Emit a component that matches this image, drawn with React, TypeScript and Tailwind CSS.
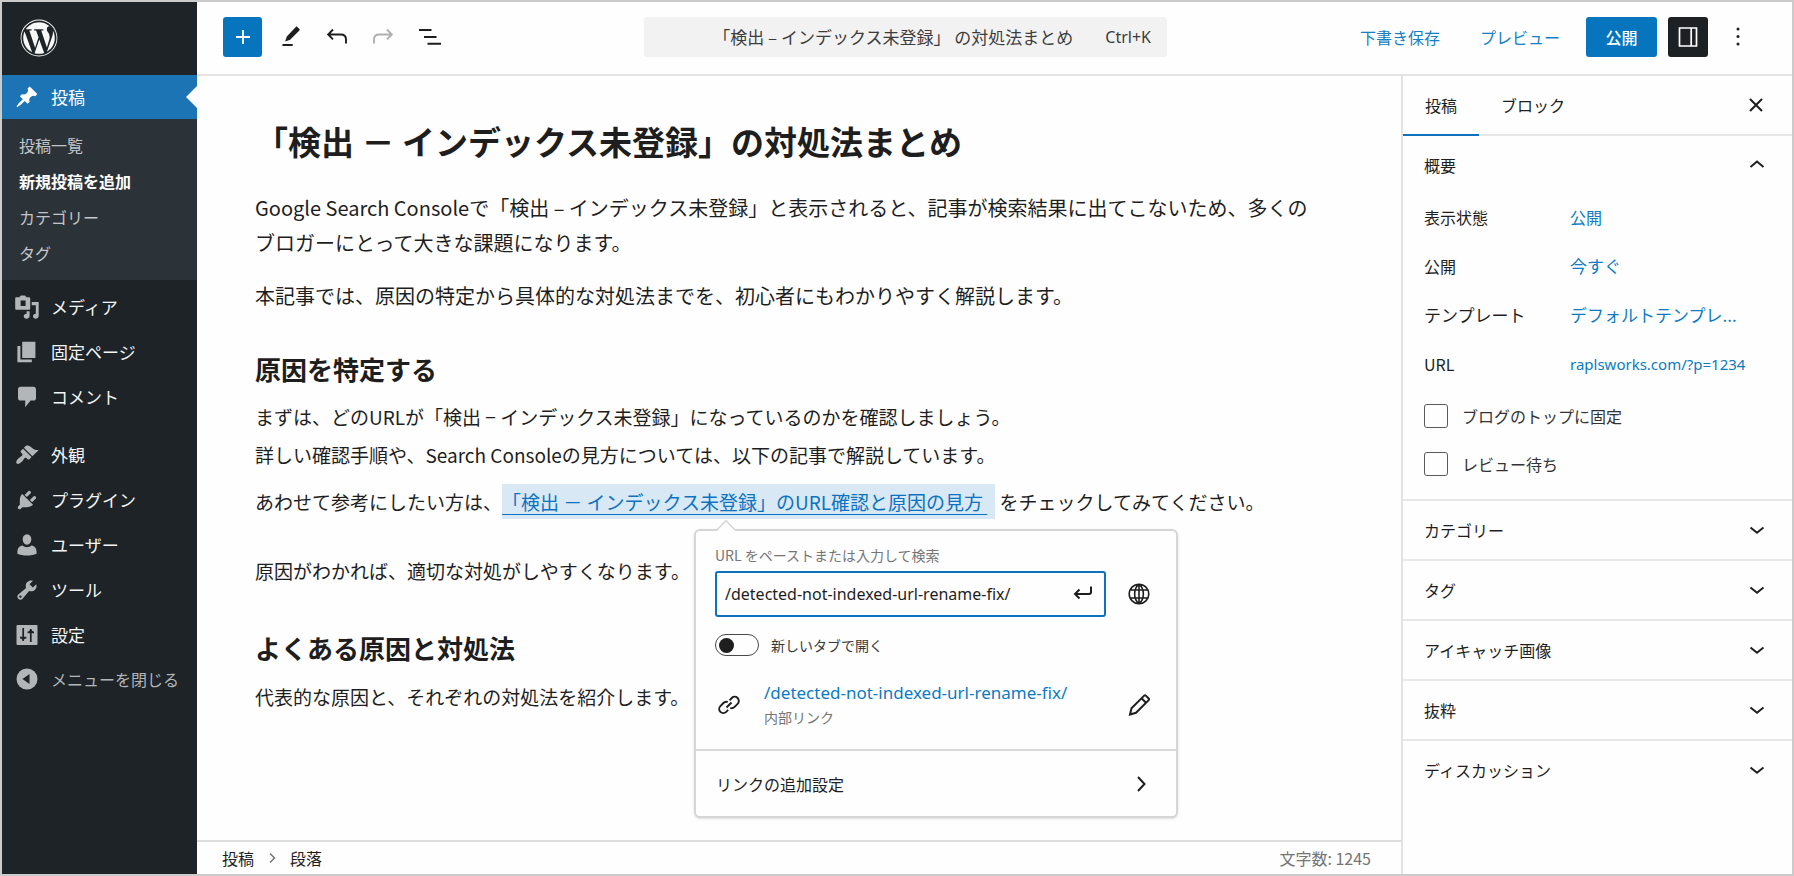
import type { ReactNode } from "react";
import { FaWordpress } from "react-icons/fa";

type MenuEntry = { label: string; icon: ReactNode; gapBefore?: boolean };

function Dash({ d, className = "" }: { d: string; className?: string }) {
  return (
    <svg viewBox="0 0 20 20" className={`size-6 shrink-0 ${className}`} fill="currentColor" aria-hidden="true">
      <path d={d} />
    </svg>
  );
}

const PIN =
  "M10.44 3.02l1.82-1.82 6.36 6.35-1.83 1.82c-1.05-.68-2.48-.57-3.41.36l-.75.75c-.92.93-1.04 2.35-.35 3.41l-1.83 1.82-2.41-2.41-2.8 2.79c-.42.42-3.38 2.71-3.8 2.29s1.86-3.39 2.28-3.81l2.79-2.79L4.1 9.36l1.83-1.82c1.05.69 2.48.57 3.4-.36l.75-.75c.93-.92 1.05-2.35.36-3.41z";

const menu: MenuEntry[] = [
  {
    label: "メディア",
    icon: (
      <svg viewBox="0 0 24 24" className="size-6 shrink-0" fill="currentColor" aria-hidden="true">
        <path
          fillRule="evenodd"
          d="M2 2.3h2.6V1.2h1V.4h4.6v.8h1v1.1h3.1c.5 0 .9.4.9.9v10.6c0 .5-.4.9-.9.9H1.1c-.5 0-.9-.4-.9-.9V3.200c0-.5.4-.9.9-.9zm3.600 3.200v5.600h5V5.500z"
        />
        <path d="M16.700 7h7v13.800c0 1.700-1.200 2.900-3 2.900-1.600 0-2.700-1-2.700-2.400s1.100-2.500 2.800-2.500V10.200h-4.100zM11.600 16.200h3v4.600c0 1.700-1.200 2.900-3 2.900s-2.900-1-2.900-2.400 1.200-2.500 2.900-2.500z" />
      </svg>
    ),
  },
  { label: "固定ページ", icon: <Dash d="M6 15V1.500h11V15H6zm-1.500 1.200h9.500v2.300H2V5h2.500z" /> },
  {
    label: "コメント",
    icon: <Dash d="M4.500 1.500h11c1.100 0 2 .9 2 2v7.500c0 1.100-.9 2-2 2h-2.500l-4.500 5.500V13h-4c-1.100 0-2-.9-2-2V3.500c0-1.100.9-2 2-2z" />,
  },
  {
    label: "外観",
    gapBefore: true,
    icon: (
      <Dash d="M14.480 11.060L7.410 3.990l1.500-1.500c.5-.56 2.300-.47 3.510.32 1.210.8 1.430 1.280 2.910 2.100 1.180.64 2.450 1.260 4.450.85zm-.71.71L6.700 4.700 4.930 6.470c-.39.39-.39 1.020 0 1.410l1.060 1.060c.39.39.39 1.030 0 1.420-.6.6-1.430 1.110-2.210 1.690-.35.26-.7.53-1.010.84C1.430 14.230.4 16.080 1.400 17.070c.99 1 2.840-.03 4.180-1.360.31-.31.58-.66.85-1.020.57-.78 1.080-1.610 1.690-2.210.39-.39 1.020-.39 1.410 0l1.060 1.060c.39.39 1.020.39 1.410 0z" />
    ),
  },
  {
    label: "プラグイン",
    icon: (
      <Dash d="M13.110 4.360L9.870 7.600 8 5.730l3.240-3.240c.35-.34 1.050-.2 1.560.32.52.51.66 1.210.31 1.550zm-8 1.770l.91-1.120 9.010 9.010-1.190.84c-.71.71-2.630 1.160-3.820 1.160H6.140L4.900 17.260c-.59.59-1.540.59-2.120 0-.59-.58-.59-1.530 0-2.120l1.240-1.240v-3.880c0-1.130.4-3.190 1.090-3.890zm7.260 3.970l3.240-3.240c.34-.35 1.040-.21 1.550.31.52.51.66 1.210.31 1.550l-3.240 3.250z" />
    ),
  },
  {
    label: "ユーザー",
    icon: (
      <Dash d="M10 1c2.200 0 3.600 1.800 3.600 4.200S12 9.700 10 9.700 6.400 7.600 6.400 5.200 7.800 1 10 1zM6.300 10.500c1 .8 2.200 1.300 3.700 1.300s2.700-.5 3.700-1.300c2.700.3 4.300 2.500 4.300 5.300v1.400c-2 1-5 1.500-8 1.500s-6-.5-8-1.500v-1.400c0-2.800 1.600-5 4.300-5.300z" />
    ),
  },
  {
    label: "ツール",
    icon: (
      <Dash d="M16.680 9.770c-1.340 1.340-3.300 1.670-4.950.99l-5.410 6.520c-.99.99-2.590.99-3.580 0s-.99-2.590 0-3.570l6.520-5.420c-.68-1.650-.35-3.610.99-4.950 1.280-1.280 3.120-1.620 4.720-1.060l-2.890 2.890 2.820 2.820 2.860-2.870c.53 1.580.18 3.390-1.080 4.650zM3.810 16.210c.4.39 1.040.39 1.430 0 .4-.4.4-1.040 0-1.430-.39-.4-1.030-.4-1.430 0-.39.39-.39 1.030 0 1.430z" />
    ),
  },
  {
    label: "設定",
    icon: (
      <svg viewBox="0 0 24 24" className="size-6 shrink-0" aria-hidden="true">
        <rect x="1.500" y="2" width="21" height="20" rx="1" fill="currentColor" />
        <path d="M8.200 5v13M15.800 6v13M5 14.700h6.400M12.600 9.300H19" stroke="#1d2327" strokeWidth="1.700" fill="none" />
        <path d="M5.400 14.700h5.600l-2.800 2.600zM13 9.300h5.600L15.800 6z" fill="#1d2327" />
      </svg>
    ),
  },
];

const sections = ["カテゴリー", "タグ", "アイキャッチ画像", "抜粋", "ディスカッション"];

const details = [
  { label: "表示状態", value: "公開", size: "text-base", valueFont: "text-base" },
  { label: "公開", value: "今すぐ", size: "text-base", valueFont: "text-[17px]" },
  { label: "テンプレート", value: "デフォルトテンプレ...", size: "text-[17px]", valueFont: "text-[17px]" },
  { label: "URL", value: "raplsworks.com/?p=1234", size: "text-base", valueFont: "font-[Noto_Sans,sans-serif] text-[15px]" },
];

function Line({ d, className = "", width = 2 }: { d: string; className?: string; width?: number }) {
  return (
    <svg
      viewBox="0 0 24 24"
      className={`size-6 shrink-0 ${className}`}
      fill="none"
      stroke="currentColor"
      strokeWidth={width}
      aria-hidden="true"
    >
      <path d={d} />
    </svg>
  );
}

const CHEVRON_DOWN = "M5.500 9.500 12 14.700l6.500-5.200";
const CHEVRON_UP = "M5.500 14 12 8.500l6.500 5.500";

function Sidebar() {
  return (
    <nav aria-label="管理メニュー" className="flex w-[195px] shrink-0 flex-col bg-[#1d2327] text-[17px] leading-6 text-[#f4f5f5]">
      <a href="#home" aria-label="WordPress" className="flex h-[73px] items-center pb-0.5 pl-[18px] text-[38px] text-[#f6f7f7]">
        <FaWordpress />
      </a>
      <a href="#posts" className="relative flex h-11 items-center gap-3 bg-[#1d74b5] pl-[13px] text-white">
        <Dash d={PIN} />
        投稿
        <span className="absolute top-1/2 right-0 -translate-y-1/2 border-y-[11px] border-r-[11px] border-y-transparent border-r-[#fdfdfd]" />
      </a>
      <ul className="bg-[#2c3338] pt-2 pb-[9px] pl-[17px] text-base leading-9 text-[#c3c6c9]">
        <li><a href="#list">投稿一覧</a></li>
        <li><a href="#new" className="font-bold text-white">新規投稿を追加</a></li>
        <li><a href="#categories">カテゴリー</a></li>
        <li><a href="#tags">タグ</a></li>
      </ul>
      <ul className="pt-1">
        {menu.map((m) => (
          <li key={m.label} className={m.gapBefore ? "mt-[13px]" : ""}>
            <a href="#menu" className="flex h-[45px] items-center gap-3 pl-[13px]">
              <span className="text-[#b3b6b8]">{m.icon}</span>
              {m.label}
            </a>
          </li>
        ))}
      </ul>
      <button type="button" className="flex h-11 items-center gap-3 pl-[13px] text-base text-[#b3b6b8]">
        <svg viewBox="0 0 24 24" className="size-6 shrink-0" aria-hidden="true">
          <circle cx="12" cy="12" r="10.500" fill="currentColor" />
          <path d="M14.500 7v10L7.500 12z" fill="#1d2327" />
        </svg>
        メニューを閉じる
      </button>
    </nav>
  );
}

function TopBar() {
  return (
    <header className="flex h-[74px] shrink-0 items-center border-b-2 border-[#e4e4e4] pr-[42px] pb-0.5 pl-[26px]">
      <div className="flex w-[421px] items-center text-[#1e1e1e]">
        <button type="button" aria-label="ブロックを追加" className="flex h-10 w-[39px] items-center justify-center rounded-[3px] bg-[#0675bd] text-white">
          <Line d="M12 5v14M5 12h14" width={1.8} />
        </button>
        <button type="button" aria-label="ツール" className="ml-[17px]">
          <svg viewBox="0 0 24 24" className="size-6" fill="currentColor" aria-hidden="true">
            <path d="M16.800 1.900c.5-.4 1-.4 1.500 0l2.100 2c.5.500.5 1 0 1.500l-9.300 9.400-4.900 1.800 1.600-5.100zM3.500 19h10.200v2H3.500z" />
          </svg>
        </button>
        <button type="button" aria-label="元に戻す" className="ml-[22px]">
          <Line d="M8 4.500 3.200 9.500 8 14.400M3.500 9.500h12.200c3.300 0 5.300 1.900 5.300 5V18.500" width={1.9} />
        </button>
        <button type="button" aria-label="やり直す" className="ml-[22px] text-[#b0b0b0]">
          <Line d="M16 4.500 20.800 9.500 16 14.400M20.500 9.500H8.300C5 9.500 3 11.400 3 14.500V18.500" width={1.9} />
        </button>
        <button type="button" aria-label="ドキュメント概観" className="ml-[23px]">
          <Line d="M1 5h12.500M6 12h12.500M9.500 18.700h13.500" width={1.9} />
        </button>
      </div>
      <button
        type="button"
        className="flex h-10 max-w-[523px] flex-1 items-center justify-end gap-8 rounded-[3px] bg-[#f3f2f3] pr-4 text-[17px] whitespace-nowrap text-[#3c3c3c]"
      >
        <span>「検出 – インデックス未登録」 の対処法まとめ</span>
        <kbd className="font-[Noto_Sans,sans-serif] text-base">Ctrl+K</kbd>
      </button>
      <div className="ml-auto flex items-center text-base whitespace-nowrap text-[#1480c5]">
        <button type="button">下書き保存</button>
        <button type="button" className="ml-10">プレビュー</button>
        <button type="button" className="ml-[26px] h-10 w-[71px] rounded-[3px] bg-[#0675bd] font-medium text-white">公開</button>
        <button type="button" aria-label="設定" className="ml-[11px] flex size-10 items-center justify-center rounded-[3px] bg-[#1e2124] text-white">
          <Line d="M3.500 3h17v18h-17zM15.200 3v18" width={1.7} />
        </button>
        <button type="button" aria-label="オプション" className="ml-[18px] text-[#1e1e1e]">
          <svg viewBox="0 0 24 24" className="size-6" fill="currentColor" aria-hidden="true">
            <circle cx="12" cy="4" r="1.500" />
            <circle cx="12" cy="11.500" r="1.500" />
            <circle cx="12" cy="19" r="1.500" />
          </svg>
        </button>
      </div>
    </header>
  );
}

function LinkPopover() {
  return (
    <div
      role="dialog"
      aria-label="リンクの編集"
      className="absolute top-[45px] left-48 z-10 w-[484px] rounded-md border-2 border-[#d6d6d6] bg-[#fefefe] text-[#1e1e1e] shadow-sm"
    >
      <svg viewBox="0 0 20 12" className="absolute -top-3 left-5 h-3 w-5" aria-hidden="true">
        <path d="M1 11 10 1.500 19 11V12H1z" fill="#fefefe" />
        <path d="M0 11h1L10 1.500 19 11h1" fill="none" stroke="#d6d6d6" strokeWidth="1.500" />
      </svg>
      <div className="pt-3 pr-[25px] pb-5 pl-[19px]">
        <label htmlFor="link-url" className="block text-sm leading-6 text-[#757575]">
          URL をペーストまたは入力して検索
        </label>
        <div className="mt-1 flex items-center justify-between">
          <div className="flex h-[46px] w-[391px] items-center rounded-[3px] border-2 border-[#0b73bd] pr-[9px] pl-2">
            <input
              id="link-url"
              defaultValue="/detected-not-indexed-url-rename-fix/"
              className="min-w-0 flex-1 bg-transparent font-[Noto_Sans,sans-serif] text-base leading-6 outline-none"
            />
            <button type="button" aria-label="適用">
              <Line d="M20 4.500v5.500c0 1.300-.7 2-2 2H4M8.500 7.500 4 12l4.500 4.500" />
            </button>
          </div>
          <button type="button" aria-label="リンク先">
            <Line
              d="M12 2.200a9.800 9.800 0 1 0 0 19.600 9.800 9.800 0 0 0 0-19.600zM12 2.200c-5.800 4.800-5.800 14.800 0 19.600 5.800-4.800 5.800-14.800 0-19.600zM12 2.200v19.600M3.600 8h16.800M3.600 16h16.800"
              width={1.6}
            />
          </button>
        </div>
        <div className="mt-4 flex items-center gap-3 text-[#3a3a3a]">
          <input
            id="new-tab"
            type="checkbox"
            role="switch"
            className="flex h-[22px] w-11 appearance-none items-center rounded-full border border-[#4a4a4a] pl-[3px] before:size-[15px] before:rounded-full before:bg-[#1e1e1e] before:content-[''] checked:justify-end checked:pr-[3px]"
          />
          <label htmlFor="new-tab" className="text-sm leading-6">新しいタブで開く</label>
        </div>
        <div className="mt-6 flex items-center">
          <svg viewBox="0 0 24 24" className="ml-0.5 size-6 shrink-0" fill="none" stroke="currentColor" strokeWidth="1.900" aria-hidden="true">
            <path d="M9.500 14.500l5-5M12.600 7.300l2.200-2.300a4.100 4.100 0 0 1 5.800 5.800l-3 3.100a4.100 4.100 0 0 1-4.300 1M11.200 16.800l-2 2.100a4.100 4.100 0 0 1-5.800-5.800l3-3.100a4.100 4.100 0 0 1 4.300-1" />
          </svg>
          <div className="ml-[23px]">
            <a href="#target" className="block font-[Noto_Sans,sans-serif] text-[17px] leading-6 text-[#0b7bc3]">
              /detected-not-indexed-url-rename-fix/
            </a>
            <span className="block text-sm leading-6 text-[#757575]">内部リンク</span>
          </div>
          <button type="button" aria-label="編集" className="ml-auto">
            <Line d="M3 21.500l1.500-6.200L17.200 2.600c.5-.5 1.100-.5 1.600 0l2.900 2.900c.5.500.5 1.100 0 1.600L9 19.800zM14.500 5.300l4.500 4.500" />
          </button>
        </div>
      </div>
      <button type="button" className="flex h-[67px] w-full items-center justify-between border-t-2 border-[#d9d9d9] pr-[23px] pl-5 text-base">
        リンクの追加設定
        <Line d="M9 5l6.500 7L9 19" />
      </button>
    </div>
  );
}

function Editor() {
  return (
    <main className="flex min-w-0 flex-1 flex-col">
      <article className="flex-1 pr-20 pl-[58px] text-[19px] leading-[38px] text-[#1e1e1e]">
        <h1 className="mt-10 text-[33px] leading-[50px] font-bold">「検出 － インデックス未登録」の対処法まとめ</h1>
        <p className="mt-6 text-[20px] leading-[35px]">
          Google Search Consoleで「検出 – インデックス未登録」と表示されると、記事が検索結果に出てこないため、多くのブロガーにとって大きな課題になります。
        </p>
        <p className="mt-[18px] text-[20px] leading-[35px]">
          本記事では、原因の特定から具体的な対処法までを、初心者にもわかりやすく解説します。
        </p>
        <h2 className="mt-9 text-[26px] leading-10 font-bold">原因を特定する</h2>
        <p className="mt-[9px]">
          まずは、どのURLが「検出 − インデックス未登録」になっているのかを確認しましょう。
          <br />
          詳しい確認手順や、Search Consoleの見方については、以下の記事で解説しています。
        </p>
        <p className="mt-[9px]">
          あわせて参考にしたい方は、
          <span className="relative inline-block bg-[#d9e8f5] pr-2 leading-[35px]">
            <a href="#detected" className="text-[#0b73c2] underline decoration-1 underline-offset-4">
              「検出 － インデックス未登録」のURL確認と原因の見方&nbsp;
            </a>
            <LinkPopover />
          </span>
          {" "}をチェックしてみてください。
        </p>
        <p className="mt-[31px]">原因がわかれば、適切な対処がしやすくなります。</p>
        <h2 className="mt-[38px] text-[26px] leading-10 font-bold">よくある原因と対処法</h2>
        <p className="mt-[10px]">代表的な原因と、それぞれの対処法を紹介します。</p>
      </article>
      <footer className="flex h-[34px] items-center justify-between border-t-2 border-[#dedede] pr-[30px] pl-[25px] text-base leading-6 text-[#1e1e1e]">
        <div className="flex items-center gap-2">
          投稿
          <svg viewBox="0 0 20 20" className="size-5 text-[#757575]" fill="none" stroke="currentColor" strokeWidth="1.500" aria-hidden="true">
            <path d="M8 5.500l4.500 4.500L8 14.500" />
          </svg>
          段落
        </div>
        <div className="text-[#757575]">文字数: 1245</div>
      </footer>
    </main>
  );
}

function Settings() {
  return (
    <aside className="w-[391px] shrink-0 border-l-2 border-[#e2e2e2] text-base leading-6 text-[#1e1e1e]">
      <div className="flex h-[60px] items-stretch border-b-2 border-[#e6e6e6]">
        <button type="button" className="-mb-0.5 w-[76px] border-b-2 border-[#0b73bd]">投稿</button>
        <button type="button" className="ml-[22px]">ブロック</button>
        <button type="button" aria-label="閉じる" className="mr-6 ml-auto">
          <Line d="M6 6l12 12M18 6L6 18" />
        </button>
      </div>
      <section className="pr-[23px] pl-[21px]">
        <h2>
          <button type="button" className="flex h-14 w-full items-center justify-between pt-0.5">
            概要
            <Line d={CHEVRON_UP} />
          </button>
        </h2>
        <dl>
          {details.map((d) => (
            <div key={d.label} className={`flex h-[49px] items-center ${d.size}`}>
              <dt className="w-[146px] shrink-0">{d.label}</dt>
              <dd className="whitespace-nowrap">
                <a href="#detail" className={`text-[#0b7bc3] ${d.valueFont}`}>
                  {d.value}
                </a>
              </dd>
            </div>
          ))}
        </dl>
        <div className="pt-1 pb-[11px]">
          {["ブログのトップに固定", "レビュー待ち"].map((t) => (
            <label key={t} className="flex h-12 items-center gap-[14px] text-[#333333]">
              <input type="checkbox" className="size-6 appearance-none rounded-[3px] border border-[#5a5a5a] checked:bg-[#0675bd]" />
              {t}
            </label>
          ))}
        </div>
      </section>
      {sections.map((s) => (
        <button
          key={s}
          type="button"
          className="flex h-[60px] w-full items-center justify-between border-t-2 border-[#e8e8e8] pr-[23px] pl-[21px]"
        >
          {s}
          <Line d={CHEVRON_DOWN} />
        </button>
      ))}
    </aside>
  );
}

export default function App() {
  return (
    <div
      lang="ja"
      className="flex min-h-screen border-2 border-[#cbcbcb] bg-[#fefefe] font-[Noto_Sans_CJK_JP,Noto_Sans,sans-serif]"
    >
      <Sidebar />
      <div className="flex min-w-0 flex-1 flex-col">
        <TopBar />
        <div className="flex flex-1">
          <Editor />
          <Settings />
        </div>
      </div>
    </div>
  );
}
